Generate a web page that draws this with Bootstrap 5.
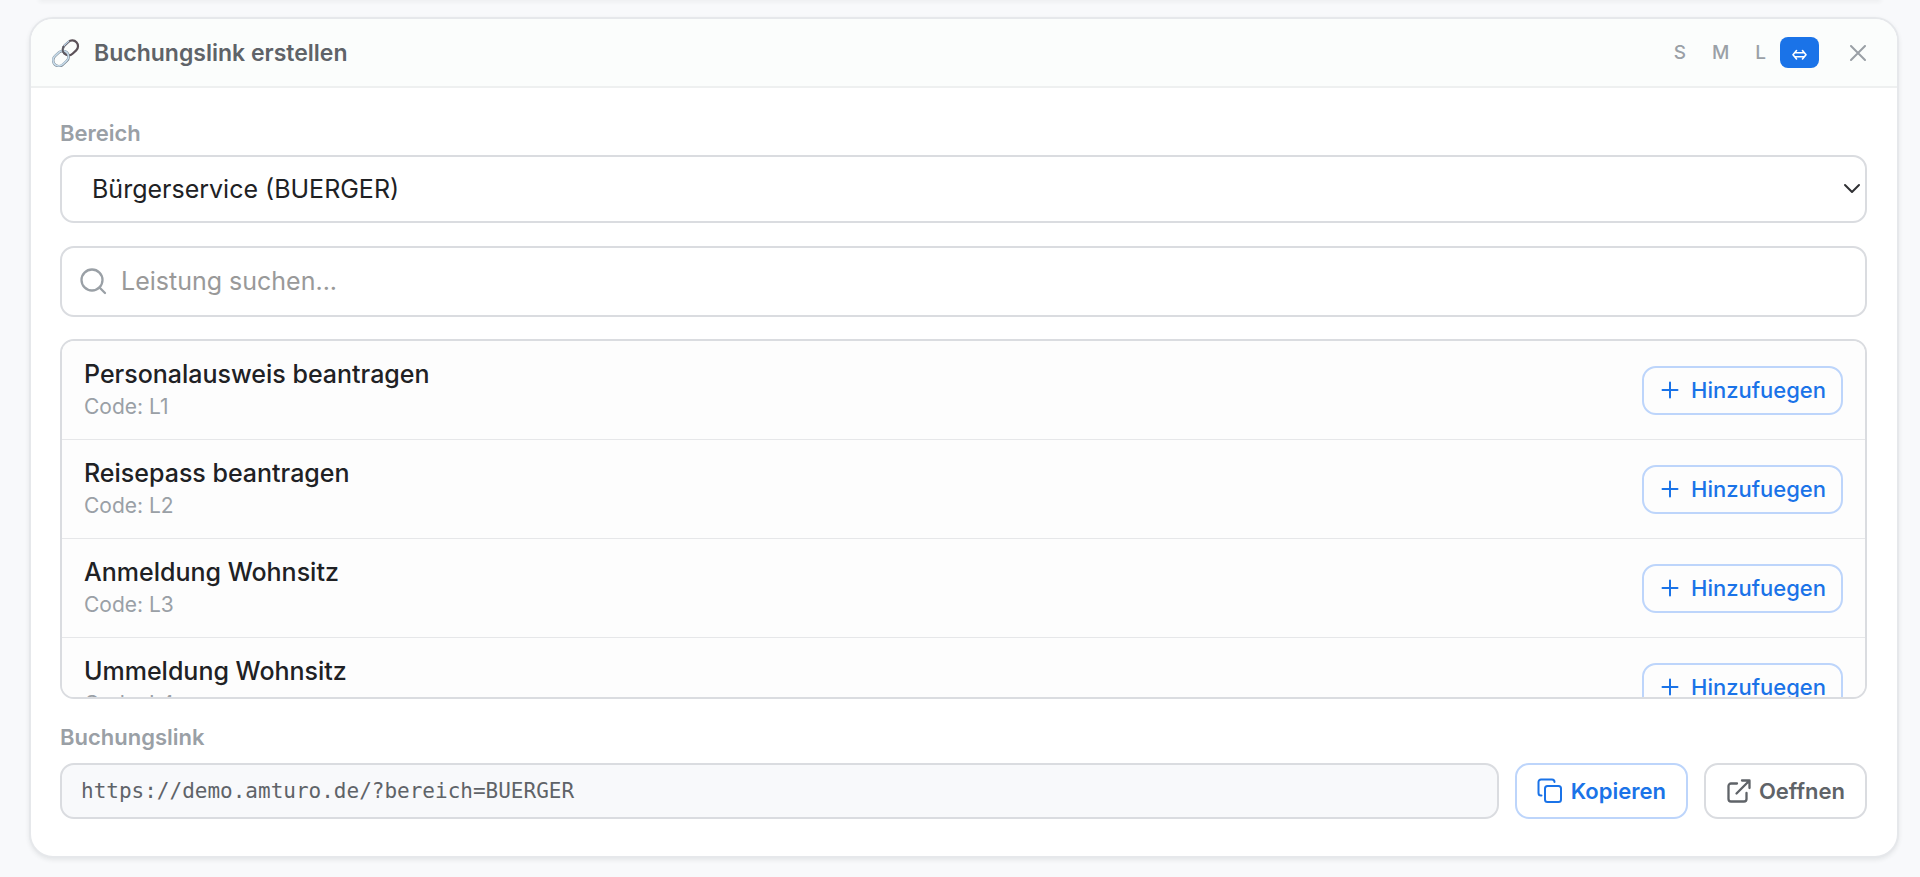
<!DOCTYPE html>
<html lang="de">
<head>
<meta charset="utf-8">
<meta name="viewport" content="width=device-width, initial-scale=1">
<title>Buchungslink erstellen</title>
<link rel="stylesheet" href="https://cdn.jsdelivr.net/npm/bootstrap@5.3.0/dist/css/bootstrap.min.css">
<style>
  :root { --ink: #202124; --soft: #5f6368; --faint: #9aa0a6; --line: #dadce0; --brand: #1a73e8; --brand-line: #bdd5fb; }
  body { background: #f8f9fb; color: var(--ink); font-family: Inter, "Liberation Sans", sans-serif; font-size: 24px; overflow-x: hidden; }
  .previous-edge { height: 0; margin: 0 40px; box-shadow: 0 0 4px 1px rgba(60, 64, 67, .12); }
  .panel { margin: 17px 21px 19px 29px; border: 2px solid #e6e8eb; border-radius: 24px; box-shadow: 0 2px 4px rgba(60, 64, 67, .1); }
  .panel-top { background: #fbfdfc; border-bottom: 2px solid #eef0f0; border-radius: 22px 22px 0 0; height: 69px; padding: 0 23px 0 21px; }
  .panel-title { font-size: 23px; line-height: 28px; font-weight: 600; color: var(--soft); margin-left: 14px; }
  .panel-main { padding: 31px 30px 37px 29px; }
  .sizes { gap: 2px; }
  .size-btn { border: 0; background: none; color: var(--faint); font-size: 19px; line-height: 31px; font-weight: 500; padding: 0 12px; border-radius: 8px; }
  .size-btn.active { background: var(--brand); color: #fff; }
  .close-btn { border: 0; background: none; color: var(--faint); padding: 0 8px; margin-left: 23px; }
  .field-label { display: block; font-size: 22px; line-height: 28px; font-weight: 600; color: var(--faint); }
  .field { border: 2px solid var(--line); border-radius: 14px; background-color: #fff; }
  .area-select { appearance: none; width: 100%; height: 68px; padding: 2px 60px 0 30px; color: var(--ink); font-size: 25px; outline: 0; }
  .area-arrow { position: absolute; right: 6px; top: 28px; pointer-events: none; }
  .search { height: 71px; margin-top: 23px; padding: 0 18px; color: var(--faint); }
  .search input { border: 0; outline: 0; background: none; font-size: 25px; margin-left: 14px; padding: 0; color: var(--ink); }
  .search input::placeholder { color: #999; opacity: 1; }
  .services { height: 360px; margin-top: 22px; overflow: hidden; }
  .service { height: 99px; padding: 0 22px; background: #fdfdfd; border-bottom: 1px solid #e6e7e9; }
  .service-name { font-size: 25px; line-height: 34px; font-weight: 500; }
  .service-code { font-size: 21px; line-height: 32px; color: var(--faint); }
  .act { background: #fff; border: 2px solid var(--line); border-radius: 14px; font-size: 22px; color: var(--soft); font-weight: 600; text-decoration: none; height: 56px; padding: 0 20px; }
  .act-brand { color: var(--brand); border-color: var(--brand-line); }
  .act-add { height: 49px; padding: 0 15px; font-weight: 500; background: none; }
  .link-row { margin-top: 12px; }
  .link-box { height: 56px; min-width: 0; padding: 0 19px; background: #f8f9fb; color: var(--soft); font-family: "DejaVu Sans Mono", monospace; font-size: 21px; outline: 0; }
  svg { display: block; flex: none; fill: none; stroke: currentColor; stroke-width: 2; stroke-linecap: round; stroke-linejoin: round; }
  .thin { stroke-width: 1.6; }
  .bold-line { stroke-width: 2.3; }
</style>
</head>
<body>
<svg class="d-none">
  <symbol id="plus" viewBox="0 0 24 24"><path d="M11 4.500v15M3.500 12h15"/></symbol>
</svg>
<div class="previous-edge"></div>
<main class="panel bg-white">
  <header class="panel-top d-flex align-items-center">
    <svg width="28" height="28" viewBox="0 0 28 28" aria-hidden="true">
      <g transform="rotate(-43 14 14)">
        <rect x="12.500" y="7.500" width="16.500" height="11.500" rx="5.750" stroke="#5b5158" stroke-width="2.200"/>
        <path d="M14 9.500Q15.500 7.200 18.500 7.200h5.500" stroke="#b9d0e2" stroke-width="1.300"/>
        <rect x="-2" y="8.800" width="17" height="11.500" rx="5.750" stroke="#77838e" stroke-width="2.500"/>
        <rect x="-2" y="8.600" width="17" height="11.500" rx="5.750" stroke="#c6dbea" stroke-width="1.600"/>
        <path d="M12.500 13q0-4 4-5.300" stroke="#5c5961" stroke-width="1.800"/>
      </g>
    </svg>
    <h1 class="panel-title mb-0 me-auto">Buchungslink erstellen</h1>
    <div class="sizes d-flex align-items-center">
      <button type="button" class="size-btn">S</button>
      <button type="button" class="size-btn">M</button>
      <button type="button" class="size-btn">L</button>
      <button type="button" class="size-btn active" aria-label="Volle Breite">
        <svg class="thin" width="15" height="31" viewBox="0 0 15 31"><path d="M3 15.700h9M3 19.700h9M4.500 13.500L1 17.700l3.500 4.200M10.500 13.500l3.500 4.200-3.500 4.200"/></svg>
      </button>
    </div>
    <button type="button" class="close-btn" aria-label="Schließen">
      <svg width="16" height="16" viewBox="0 0 16 16"><path d="M1 1l14 14M15 1L1 15"/></svg>
    </button>
  </header>
  <div class="panel-main">
    <label class="field-label" for="area">Bereich</label>
    <div class="position-relative mt-2">
      <select id="area" class="field area-select d-block"><option>Bürgerservice (BUERGER)</option></select>
      <svg class="area-arrow" width="18" height="12" viewBox="0 0 18 12" color="#303134"><path d="M2 2l7 7 7-7"/></svg>
    </div>
    <div class="field search d-flex align-items-center">
      <svg class="bold-line" width="27" height="27" viewBox="0 0 27 27"><circle cx="12" cy="12" r="10.500"/><path d="M19.500 19.500l5.500 5.500"/></svg>
      <input class="flex-grow-1" type="search" placeholder="Leistung suchen..." aria-label="Leistung suchen">
    </div>
    <div class="field services">
      <div class="service d-flex align-items-center justify-content-between">
        <div><div class="service-name">Personalausweis beantragen</div><div class="service-code">Code: L1</div></div>
        <button type="button" class="act act-brand act-add d-flex align-items-center gap-2"><svg width="24" height="24"><use href="#plus"/></svg>Hinzufuegen</button>
      </div>
      <div class="service d-flex align-items-center justify-content-between">
        <div><div class="service-name">Reisepass beantragen</div><div class="service-code">Code: L2</div></div>
        <button type="button" class="act act-brand act-add d-flex align-items-center gap-2"><svg width="24" height="24"><use href="#plus"/></svg>Hinzufuegen</button>
      </div>
      <div class="service d-flex align-items-center justify-content-between">
        <div><div class="service-name">Anmeldung Wohnsitz</div><div class="service-code">Code: L3</div></div>
        <button type="button" class="act act-brand act-add d-flex align-items-center gap-2"><svg width="24" height="24"><use href="#plus"/></svg>Hinzufuegen</button>
      </div>
      <div class="service d-flex align-items-center justify-content-between">
        <div><div class="service-name">Ummeldung Wohnsitz</div><div class="service-code">Code: L4</div></div>
        <button type="button" class="act act-brand act-add d-flex align-items-center gap-2"><svg width="24" height="24"><use href="#plus"/></svg>Hinzufuegen</button>
      </div>
    </div>
    <label class="field-label mt-4" for="link">Buchungslink</label>
    <div class="link-row d-flex gap-3">
      <input id="link" class="field link-box flex-grow-1" type="text" readonly value="https://demo.amturo.de/?bereich=BUERGER">
      <button type="button" class="act act-brand d-flex align-items-center gap-2">
        <svg width="26" height="26" viewBox="0 0 26 26"><rect x="8" y="8" width="16" height="16" rx="2.500"/><path d="M4.500 17.500H4A2.500 2.500 0 0 1 1.500 15V4A2.500 2.500 0 0 1 4 1.500h11A2.500 2.500 0 0 1 17.500 4"/></svg>Kopieren</button>
      <a href="#" class="act d-flex align-items-center gap-2">
        <svg class="bold-line" width="25" height="25" viewBox="0 0 25 25"><path d="M11 4.500H5A2.500 2.500 0 0 0 2.500 7v13A2.500 2.500 0 0 0 5 22.500h13a2.500 2.500 0 0 0 2.500-2.500v-6M16 1.500h7.500V9M23 2L10.500 14.500"/></svg>Oeffnen</a>
    </div>
  </div>
</main>
<script src="https://cdn.jsdelivr.net/npm/bootstrap@5.3.0/dist/js/bootstrap.bundle.min.js"></script>
</body>
</html>
